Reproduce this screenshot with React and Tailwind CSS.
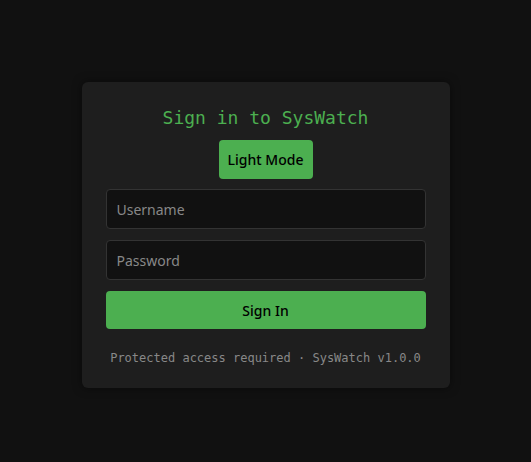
export default function App() {
  return (
    <div className="min-h-screen h-[462px] bg-[#111111] flex items-center justify-center pt-2">
      <div className="w-[368px] h-[306px] bg-[#1e1e1e] rounded-md shadow-[0_0_10px_rgba(0,0,0,0.5)] px-6 pt-[22px] flex flex-col items-center">
        <h1 className="text-[18px] leading-[28px] text-[#4caf50] font-['DejaVu_Sans_Mono',monospace]">
          Sign in to SysWatch
        </h1>
        <button className="mt-[8px] h-[39px] w-[94px] rounded bg-[#4caf50] text-black text-[14px] font-medium font-['Noto_Sans',sans-serif]">
          Light Mode
        </button>
        <input
          className="mt-[10px] w-full h-[40px] rounded border border-[#333333] bg-[#111111] px-[10px] text-[14px] text-white placeholder:text-[#888888] font-['Noto_Sans',sans-serif] outline-none"
          placeholder="Username"
        />
        <input
          type="password"
          className="mt-[11px] w-full h-[40px] rounded border border-[#333333] bg-[#111111] px-[10px] text-[14px] text-white placeholder:text-[#888888] font-['Noto_Sans',sans-serif] outline-none"
          placeholder="Password"
        />
        <button className="mt-[11px] w-full h-[38px] rounded bg-[#4caf50] text-black text-[14px] font-medium font-['Noto_Sans',sans-serif]">
          Sign In
        </button>
        <p className="mt-[21px] text-[12px] leading-[16px] text-[#888888] font-['DejaVu_Sans_Mono',monospace]">
          Protected access required · SysWatch v1.0.0
        </p>
      </div>
    </div>
  );
}
